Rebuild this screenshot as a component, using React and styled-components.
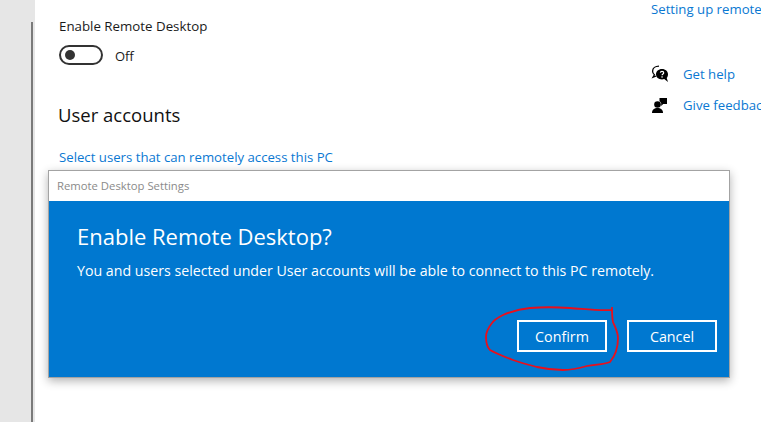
import React from 'react';
import styled, { createGlobalStyle } from 'styled-components';

const GlobalStyle = createGlobalStyle`
  html, body {
    margin: 0;
    padding: 0;
    background: #fff;
    overflow: hidden;
  }
  body {
    font-family: "Open Sans", "Liberation Sans", sans-serif;
  }
`;

const Page = styled.div`
  position: relative;
  display: flex;
  width: 761px;
  height: 422px;
  overflow: hidden;
  background: #fff;
`;

const Sidebar = styled.div`
  width: 35px;
  height: 100%;
  padding: 22px 2px 0 31px;
  box-sizing: border-box;
  background: #e6e6e6;
`;

const ScrollThumb = styled.div`
  width: 2px;
  height: 100%;
  background: #7a7a7a;
`;

const Main = styled.main`
  flex: 1;
  display: flex;
  min-width: 0;
`;

const LeftColumn = styled.div`
  width: 616px;
  flex: none;
  padding: 17px 0 0 24px;
  box-sizing: border-box;
`;

const RightColumn = styled.aside`
  flex: none;
  width: 180px;
  box-sizing: border-box;
`;

const FieldLabel = styled.div`
  font-size: 13.3px;
  line-height: 18px;
  color: #1a1a1a;
`;

const ToggleRow = styled.div`
  display: flex;
  align-items: center;
  gap: 12px;
  margin-top: 10px;
  height: 20px;
`;

const Toggle = styled.div`
  width: 44px;
  height: 20px;
  box-sizing: border-box;
  border: 2px solid #333;
  border-radius: 10px;
  display: flex;
  align-items: center;
  padding-left: 4px;
`;

const Knob = styled.div`
  width: 10px;
  height: 10px;
  border-radius: 50%;
  background: #333;
`;

const ToggleText = styled.span`
  font-size: 13px;
  padding-top: 2px;
  color: #1a1a1a;
`;

const SectionTitle = styled.h2`
  margin: 37px 0 0 -1px;
  font-size: 18.5px;
  line-height: 26px;
  font-weight: 400;
  color: #111;
`;

const BlueLink = styled.a`
  display: block;
  font-size: 13.2px;
  line-height: 18px;
  color: #0a78d2;
  white-space: nowrap;
`;

const UsersLink = styled(BlueLink)`
  margin-top: 20px;
`;

const HelpList = styled.div`
  display: flex;
  flex-direction: column;
  gap: 13px;
  margin-top: 47px;
`;

const HelpRow = styled.div`
  display: flex;
  align-items: center;
  gap: 14px;
  height: 18px;
`;

const IconBox = styled.svg`
  width: 18px;
  height: 18px;
  flex: none;
`;

const Dialog = styled.div`
  position: absolute;
  left: 48px;
  top: 170px;
  width: 682px;
  height: 208px;
  box-sizing: border-box;
  border: 1px solid #a3a3a3;
  background: #0078d0;
  box-shadow: 0 3px 9px rgba(0, 0, 0, 0.3);
  display: flex;
  flex-direction: column;
`;

const TitleBar = styled.div`
  height: 30px;
  flex: none;
  background: #fff;
  padding-left: 8px;
  font-size: 11.3px;
  line-height: 30px;
  color: #8a8a8a;
`;

const DialogBody = styled.div`
  flex: 1;
  display: flex;
  flex-direction: column;
  padding: 20px 12px 25px 28px;
  color: #fff;
`;

const DialogTitle = styled.h1`
  margin: 0;
  font-size: 22px;
  line-height: 30px;
  font-weight: 400;
`;

const DialogText = styled.p`
  margin: 10px 0 0;
  font-size: 14.2px;
  line-height: 20px;
`;

const ButtonRow = styled.div`
  display: flex;
  justify-content: flex-end;
  gap: 20px;
  margin-top: auto;
`;

const DialogButton = styled.button`
  width: 90px;
  height: 32px;
  box-sizing: border-box;
  border: 2px solid #fff;
  background: transparent;
  color: #fff;
  font-family: inherit;
  font-size: 14.3px;
  padding: 0;
`;

const Scribble = styled.svg`
  position: absolute;
  left: 480px;
  top: 300px;
  width: 145px;
  height: 75px;
  pointer-events: none;
`;

const App = () => (
  <Page>
    <GlobalStyle />
    <Sidebar>
      <ScrollThumb />
    </Sidebar>
    <Main>
      <LeftColumn>
        <FieldLabel>Enable Remote Desktop</FieldLabel>
        <ToggleRow>
          <Toggle>
            <Knob />
          </Toggle>
          <ToggleText>Off</ToggleText>
        </ToggleRow>
        <SectionTitle>User accounts</SectionTitle>
        <UsersLink>Select users that can remotely access this PC</UsersLink>
      </LeftColumn>
      <RightColumn>
        <BlueLink>Setting up remote desktop</BlueLink>
        <HelpList>
          <HelpRow>
            <IconBox viewBox="0 0 18 18">
              <path d="M8 1.2c-3.6 0-6.4 2.1-6.4 5 0 1.500.7 2.700 1.800 3.600L2 12.300l3.300-1.300" fill="none" stroke="#000" strokeWidth="1.300" />
              <path d="M11 4c-3.500 0-6 2.300-6 5.200s2.500 5.200 6 5.200c.8 0 1.500-.1 2.200-.3l3.800 2.900-1.300-4.100c.9-1 1.300-2.200 1.300-3.700C17 6.300 14.500 4 11 4z" fill="#000" />
              <path d="M9.300 7.600c.2-.9.900-1.300 1.700-1.300 1 0 1.700.6 1.700 1.400 0 1.300-1.600 1.300-1.600 2.600" fill="none" stroke="#fff" strokeWidth="1.200" />
              <rect x="10.400" y="11.300" width="1.300" height="1.300" fill="#fff" />
            </IconBox>
            <BlueLink>Get help</BlueLink>
          </HelpRow>
          <HelpRow>
            <IconBox viewBox="0 0 18 18">
              <circle cx="6.500" cy="8.500" r="3.300" fill="#000" />
              <path d="M1 17c0-3.200 2.300-5 5.500-5s5.500 1.800 5.500 5z" fill="#000" />
              <path d="M8.500 2h7.500v6h-3.800l-2 2V7.200c-.5-1-1-1.500-1.700-2z" fill="#000" />
            </IconBox>
            <BlueLink>Give feedback</BlueLink>
          </HelpRow>
        </HelpList>
      </RightColumn>
    </Main>
    <Dialog>
      <TitleBar>Remote Desktop Settings</TitleBar>
      <DialogBody>
        <DialogTitle>Enable Remote Desktop?</DialogTitle>
        <DialogText>You and users selected under User accounts will be able to connect to this PC remotely.</DialogText>
        <ButtonRow>
          <DialogButton>Confirm</DialogButton>
          <DialogButton>Cancel</DialogButton>
        </ButtonRow>
      </DialogBody>
    </Dialog>
    <Scribble viewBox="480 300 145 75">
      <path
        d="M612 309 L612 310 C598 311 585 309 570 308 C555 307 542 307 530 308 C518 309 510 312 503 315 C497 318 494 320 492 323 C488 328 486 332 486 337 C486 343 487 347 490 350 C497 354 505 357 513 360 C521 363 529 365 537 367 C546 369 555 370 563 370 C572 370 580 368 587 366 C595 364 603 365 610 362 C615 356 618 347 618 338 C618 332 615 327 613 322 C612 317 612 313 612 307"
        fill="none"
        stroke="#e8101c"
        strokeWidth="1.800"
      />
    </Scribble>
  </Page>
);

export default App;
